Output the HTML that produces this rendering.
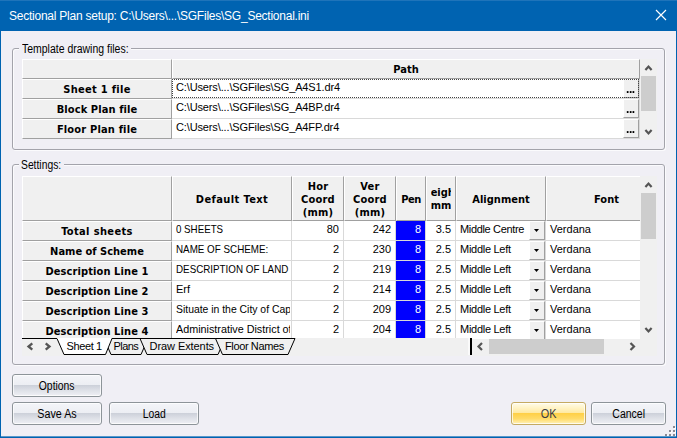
<!DOCTYPE html><html><head><meta charset="utf-8"><title>Sectional Plan setup</title><style>
*{box-sizing:border-box;margin:0;padding:0}
html,body{width:677px;height:438px;overflow:hidden}
body{background:#0063b1;font:11px "Liberation Sans",sans-serif;color:#000;position:relative}
div,svg,span.a{position:absolute}
#title{left:0;top:0;width:677px;height:31px;background:#0063b1;border-top:1px solid #1f74ba}
#title span{left:9px;top:8px;font-size:12px;color:#fff;white-space:nowrap;letter-spacing:-0.24px}
#client{left:1px;top:31px;width:675px;height:406px;background:#f0eff5}
.gb{border:1px solid #a3a3ab;border-radius:3px;box-shadow:1px 1px 0 #fbfbfd,inset 1px 1px 0 #fbfbfd}
.gbl{background:#f0eff5;white-space:nowrap;line-height:14px}
.ms{font-size:12px;display:inline-block;transform-origin:0 50%;white-space:nowrap}
.btn .ms{transform-origin:50% 50%;position:static}
.hc{background:#f0f0f0;border-right:1px solid #a0a0a0;border-bottom:1px solid #a0a0a0;border-top:1px solid #fff;border-left:1px solid #fff;font:bold 11px "DejaVu Sans Condensed","DejaVu Sans",sans-serif;text-align:center;white-space:nowrap;overflow:hidden;display:flex;align-items:center;justify-content:center;line-height:13px;padding-top:1px}
.hc span{position:static}
.rh{background:#f0f0f0;border-right:1px solid #a0a0a0;border-bottom:1px solid #a0a0a0;border-top:1px solid #fff;border-left:1px solid #fff;font:bold 11px "DejaVu Sans Condensed","DejaVu Sans",sans-serif;text-align:center;white-space:nowrap;overflow:hidden;line-height:13px;padding-top:3px}
.c{background:#fff;border-right:1px solid #d9d9d9;border-bottom:1px solid #d9d9d9;white-space:nowrap;overflow:hidden;line-height:13px;padding:2px 4px 0 4px}
.c span{display:inline-block;transform-origin:0 50%}
.r{text-align:right;padding-right:4px}
.pen{background:#0000ff;color:#fff}
.lr{border-bottom:0!important}
.fb{background:#f0f0f0;border-right:1px solid #a0a0a0;border-bottom:1px solid #a0a0a0;border-top:1px solid #fff;border-left:1px solid #fff}
.btn{border:1px solid #8d9499;border-radius:3px;text-align:center;line-height:22px;background:linear-gradient(#f4f5f9 0%,#eceef3 47%,#cdd1da 50%,#dde0e7 72%,#eff0f5 100%);box-shadow:inset 0 0 0 1px rgba(255,255,255,.75)}
.ok{border-color:#c4aa62;color:#3a3a44;background:linear-gradient(#fffce9 0%,#ffeaa2 47%,#ffd047 50%,#ffdb68 75%,#fff2bc 100%)}
.sb{background:#f0f0f0}
.th{background:#cdcdcd}
</style></head><body>
<div id="title"><span class="a">Sectional Plan setup: C:\Users\...\SGFiles\SG_Sectional.ini</span>
<svg style="left:655px;top:8px" width="12" height="12" viewBox="0 0 12 12"><path d="M1 1L11 11M11 1L1 11" stroke="#fff" stroke-width="1.15" fill="none"/></svg></div>
<div id="client"></div><div style="left:1px;top:436px;width:675px;height:1px;background:#5a97ca"></div>
<div class="gb" style="left:12px;top:48px;width:653px;height:102px;"></div>
<div class="gbl" style="left:19px;top:42px;width:112px;height:14px"><span class="a ms" style="left:3px;top:0;transform:scaleX(.873)">Template drawing files:</span></div>
<div style="left:22px;top:59px;width:635px;height:80px;background:#f0f0f0"></div>
<div class="hc" style="left:22px;top:59px;width:150px;height:20px;"></div>
<div class="hc" style="left:172px;top:59px;width:468px;height:20px;">Path</div>
<div class="rh" style="left:22px;top:79px;width:150px;height:20px;letter-spacing:0.29px;padding-top:3px">Sheet 1 file</div>
<div class="c" style="left:172px;top:79px;width:468px;height:20px;"><span style="letter-spacing:-0.13px">C:\Users\...\SGFiles\SG_A4S1.dr4</span></div>
<div class="fb" style="left:623px;top:79px;width:16px;height:19px;text-align:center;line-height:19px;font-size:12px;font-weight:bold;line-height:18px;letter-spacing:-0.4px;padding-right:1px"><span style="position:static;display:inline-block;will-change:transform">...</span></div>
<div class="rh" style="left:22px;top:99px;width:150px;height:20px;letter-spacing:0.1px;padding-top:3px">Block Plan file</div>
<div class="c" style="left:172px;top:99px;width:468px;height:20px;"><span style="letter-spacing:-0.13px">C:\Users\...\SGFiles\SG_A4BP.dr4</span></div>
<div class="fb" style="left:623px;top:99px;width:16px;height:19px;text-align:center;line-height:19px;font-size:12px;font-weight:bold;line-height:18px;letter-spacing:-0.4px;padding-right:1px"><span style="position:static;display:inline-block;will-change:transform">...</span></div>
<div class="rh" style="left:22px;top:119px;width:150px;height:20px;letter-spacing:0.17px;padding-top:3px">Floor Plan file</div>
<div class="c" style="left:172px;top:119px;width:468px;height:20px;"><span style="letter-spacing:-0.13px">C:\Users\...\SGFiles\SG_A4FP.dr4</span></div>
<div class="fb" style="left:623px;top:119px;width:16px;height:19px;text-align:center;line-height:19px;font-size:12px;font-weight:bold;line-height:18px;letter-spacing:-0.4px;padding-right:1px"><span style="position:static;display:inline-block;will-change:transform">...</span></div>
<div style="left:172px;top:79px;width:467px;height:19px;border:1px dotted #444"></div>
<div class="sb" style="left:640px;top:59px;width:17px;height:81px;"></div>
<div class="th" style="left:641px;top:76px;width:15px;height:35px;"></div>
<svg style="left:640px;top:59px" width="17" height="17" viewBox="0 0 17 17"><path d="M5.4 11L8.5 7.6L11.6 11" stroke="#555" stroke-width="2.2" fill="none"/></svg>
<svg style="left:640px;top:123px" width="17" height="17" viewBox="0 0 17 17"><path d="M5.4 7L8.5 10.4L11.6 7" stroke="#555" stroke-width="2.2" fill="none"/></svg>
<div class="gb" style="left:12px;top:164px;width:653px;height:201px;"></div>
<div class="gbl" style="left:19px;top:158px;width:45px;height:14px"><span class="a ms" style="left:2px;top:0;transform:scaleX(.86)">Settings:</span></div>
<div style="left:22px;top:176px;width:635px;height:180px;background:#f0f0f0"></div>
<div class="hc" style="left:22px;top:176px;width:150px;height:45px;"></div>
<div class="hc" style="left:172px;top:176px;width:120px;height:45px;"><span style="letter-spacing:0.4px">Default Text</span></div>
<div class="hc" style="left:292px;top:176px;width:52px;height:45px;"><span style="letter-spacing:0.2px">Hor<br>Coord<br>(mm)</span></div>
<div class="hc" style="left:344px;top:176px;width:52px;height:45px;"><span style="letter-spacing:0.2px">Ver<br>Coord<br>(mm)</span></div>
<div class="hc" style="left:396px;top:176px;width:30px;height:45px;"><span style="letter-spacing:-0.5px">Pen</span></div>
<div class="hc" style="left:426px;top:176px;width:30px;height:45px;"><span style="display:block;width:20px;overflow:hidden;"><span style="display:block;margin-left:-9px;width:38px">Height</span><span style="display:block;margin-left:-5px;width:30px">(mm)</span></span></div>
<div class="hc" style="left:456px;top:176px;width:90px;height:45px;">Alignment</div>
<div class="hc" style="left:546px;top:176px;width:94px;height:45px;border-right:0"><span style="padding-left:26px">Font</span></div>
<div class="rh" style="left:22px;top:221px;width:150px;height:20px;letter-spacing:0.36px">Total sheets</div>
<div class="c" style="left:172px;top:221px;width:120px;height:20px;"><div style="left:4px;top:2px;width:114px;height:15px;overflow:hidden"><span style="transform:scaleX(0.885)">0 SHEETS</span></div></div>
<div class="c r" style="left:292px;top:221px;width:52px;height:20px;">80</div>
<div class="c r" style="left:344px;top:221px;width:52px;height:20px;">242</div>
<div class="c r pen" style="left:396px;top:221px;width:30px;height:20px;">8</div>
<div class="c r" style="left:426px;top:221px;width:30px;height:20px;">3.5</div>
<div class="c" style="left:456px;top:221px;width:90px;height:20px;"><span style="letter-spacing:-0.34px">Middle Centre</span></div>
<div class="fb" style="left:529px;top:221px;width:16px;height:19px;"><svg width="5" height="3" viewBox="0 0 5 3" style="left:4px;top:7px"><path d="M0 0H5L2.5 3Z" fill="#000"/></svg></div>
<div class="c" style="left:546px;top:221px;width:94px;height:20px;border-right:0">Verdana</div>
<div class="rh" style="left:22px;top:241px;width:150px;height:20px;letter-spacing:0px">Name of Scheme</div>
<div class="c" style="left:172px;top:241px;width:120px;height:20px;"><div style="left:4px;top:2px;width:114px;height:15px;overflow:hidden"><span style="transform:scaleX(0.893)">NAME OF SCHEME:</span></div></div>
<div class="c r" style="left:292px;top:241px;width:52px;height:20px;">2</div>
<div class="c r" style="left:344px;top:241px;width:52px;height:20px;">230</div>
<div class="c r pen" style="left:396px;top:241px;width:30px;height:20px;">8</div>
<div class="c r" style="left:426px;top:241px;width:30px;height:20px;">2.5</div>
<div class="c" style="left:456px;top:241px;width:90px;height:20px;"><span style="letter-spacing:-0.28px">Middle Left</span></div>
<div class="fb" style="left:529px;top:241px;width:16px;height:19px;"><svg width="5" height="3" viewBox="0 0 5 3" style="left:4px;top:7px"><path d="M0 0H5L2.5 3Z" fill="#000"/></svg></div>
<div class="c" style="left:546px;top:241px;width:94px;height:20px;border-right:0">Verdana</div>
<div class="rh" style="left:22px;top:261px;width:150px;height:20px;letter-spacing:0.1px">Description Line 1</div>
<div class="c" style="left:172px;top:261px;width:120px;height:20px;"><div style="left:4px;top:2px;width:114px;height:15px;overflow:hidden"><span style="transform:scaleX(0.892)">DESCRIPTION OF LAND</span></div></div>
<div class="c r" style="left:292px;top:261px;width:52px;height:20px;">2</div>
<div class="c r" style="left:344px;top:261px;width:52px;height:20px;">219</div>
<div class="c r pen" style="left:396px;top:261px;width:30px;height:20px;">8</div>
<div class="c r" style="left:426px;top:261px;width:30px;height:20px;">2.5</div>
<div class="c" style="left:456px;top:261px;width:90px;height:20px;"><span style="letter-spacing:-0.28px">Middle Left</span></div>
<div class="fb" style="left:529px;top:261px;width:16px;height:19px;"><svg width="5" height="3" viewBox="0 0 5 3" style="left:4px;top:7px"><path d="M0 0H5L2.5 3Z" fill="#000"/></svg></div>
<div class="c" style="left:546px;top:261px;width:94px;height:20px;border-right:0">Verdana</div>
<div class="rh" style="left:22px;top:281px;width:150px;height:20px;letter-spacing:0.1px">Description Line 2</div>
<div class="c" style="left:172px;top:281px;width:120px;height:20px;"><div style="left:4px;top:2px;width:114px;height:15px;overflow:hidden"><span style="transform:scaleX(1)">Erf</span></div></div>
<div class="c r" style="left:292px;top:281px;width:52px;height:20px;">2</div>
<div class="c r" style="left:344px;top:281px;width:52px;height:20px;">214</div>
<div class="c r pen" style="left:396px;top:281px;width:30px;height:20px;">8</div>
<div class="c r" style="left:426px;top:281px;width:30px;height:20px;">2.5</div>
<div class="c" style="left:456px;top:281px;width:90px;height:20px;"><span style="letter-spacing:-0.28px">Middle Left</span></div>
<div class="fb" style="left:529px;top:281px;width:16px;height:19px;"><svg width="5" height="3" viewBox="0 0 5 3" style="left:4px;top:7px"><path d="M0 0H5L2.5 3Z" fill="#000"/></svg></div>
<div class="c" style="left:546px;top:281px;width:94px;height:20px;border-right:0">Verdana</div>
<div class="rh" style="left:22px;top:301px;width:150px;height:20px;letter-spacing:0.1px">Description Line 3</div>
<div class="c" style="left:172px;top:301px;width:120px;height:20px;"><div style="left:4px;top:2px;width:114px;height:15px;overflow:hidden"><span style="transform:scaleX(0.945)">Situate in the City of Cap</span></div></div>
<div class="c r" style="left:292px;top:301px;width:52px;height:20px;">2</div>
<div class="c r" style="left:344px;top:301px;width:52px;height:20px;">209</div>
<div class="c r pen" style="left:396px;top:301px;width:30px;height:20px;">8</div>
<div class="c r" style="left:426px;top:301px;width:30px;height:20px;">2.5</div>
<div class="c" style="left:456px;top:301px;width:90px;height:20px;"><span style="letter-spacing:-0.28px">Middle Left</span></div>
<div class="fb" style="left:529px;top:301px;width:16px;height:19px;"><svg width="5" height="3" viewBox="0 0 5 3" style="left:4px;top:7px"><path d="M0 0H5L2.5 3Z" fill="#000"/></svg></div>
<div class="c" style="left:546px;top:301px;width:94px;height:20px;border-right:0">Verdana</div>
<div class="rh lr" style="left:22px;top:321px;width:150px;height:18px;letter-spacing:0.1px">Description Line 4</div>
<div class="c lr" style="left:172px;top:321px;width:120px;height:18px;"><div style="left:4px;top:2px;width:114px;height:15px;overflow:hidden"><span style="transform:scaleX(0.98)">Administrative District of</span></div></div>
<div class="c r lr" style="left:292px;top:321px;width:52px;height:18px;">2</div>
<div class="c r lr" style="left:344px;top:321px;width:52px;height:18px;">204</div>
<div class="c r pen lr" style="left:396px;top:321px;width:30px;height:18px;">8</div>
<div class="c r lr" style="left:426px;top:321px;width:30px;height:18px;">2.5</div>
<div class="c lr" style="left:456px;top:321px;width:90px;height:18px;"><span style="letter-spacing:-0.28px">Middle Left</span></div>
<div class="fb lr" style="left:529px;top:321px;width:16px;height:18px;"><svg width="5" height="3" viewBox="0 0 5 3" style="left:4px;top:7px"><path d="M0 0H5L2.5 3Z" fill="#000"/></svg></div>
<div class="c lr" style="left:546px;top:321px;width:94px;height:18px;border-right:0">Verdana</div>
<div class="sb" style="left:640px;top:176px;width:17px;height:162px;"></div>
<div class="th" style="left:641px;top:193px;width:15px;height:46px;"></div>
<svg style="left:640px;top:176px" width="17" height="17" viewBox="0 0 17 17"><path d="M5.4 11L8.5 7.6L11.6 11" stroke="#555" stroke-width="2.2" fill="none"/></svg>
<svg style="left:640px;top:321px" width="17" height="17" viewBox="0 0 17 17"><path d="M5.4 7L8.5 10.4L11.6 7" stroke="#555" stroke-width="2.2" fill="none"/></svg>
<div style="left:22px;top:338px;width:450px;height:17px;background:#f0f0f0"></div>
<div style="left:472px;top:339px;width:185px;height:16px;background:#f0f0f0"></div>
<svg style="left:22px;top:338px" width="450" height="18" viewBox="22 338 450 18"><path d="M104 338.5L111 354.5H141L148 338.5Z" fill="#f0f0f0" stroke="#000" stroke-width="1"/><text x="113.5" y="350" font-size="11" letter-spacing="-0.55">Plans</text><path d="M140 338.5L147 354.5H218L225 338.5Z" fill="#f0f0f0" stroke="#000" stroke-width="1"/><text x="149.6" y="350" font-size="11" letter-spacing="-0.08">Draw Extents</text><path d="M215.5 338.5L222.5 354.5H288L295 338.5Z" fill="#f0f0f0" stroke="#000" stroke-width="1"/><text x="225" y="350" font-size="11" letter-spacing="-0.38">Floor Names</text><path d="M22 338.5H57" stroke="#000" fill="none"/><path d="M57 338.5L64 354.5H105.5L112 338.5" fill="#fff" stroke="#000" stroke-width="1"/><path d="M57.6 338.5H111.4" stroke="#fff" stroke-width="1.2"/><text x="66.5" y="350" font-size="11" letter-spacing="-0.39">Sheet 1</text><path d="M32.3 343.3L28.5 346.5L32.3 349.7M45.7 343.3L49.5 346.5L45.7 349.7" stroke="#555" stroke-width="2.3" fill="none"/></svg>
<div style="left:468px;top:338px;width:2px;height:17px;background:#fafafa"></div>
<div style="left:470px;top:338px;width:2px;height:17px;background:#000"></div>
<div class="th" style="left:489px;top:339px;width:115px;height:15px;"></div>
<svg style="left:472px;top:338px" width="17" height="17" viewBox="0 0 17 17"><path d="M10 5L6.5 8.5L10 12" stroke="#555" stroke-width="2.2" fill="none"/></svg>
<svg style="left:623px;top:338px" width="17" height="17" viewBox="0 0 17 17"><path d="M7.5 5L11 8.5L7.5 12" stroke="#555" stroke-width="2.2" fill="none"/></svg>
<div class="btn" style="left:12px;top:374px;width:90px;height:23px;"><span class="ms" style="transform:scaleX(.865)">Options</span></div>
<div class="btn" style="left:12px;top:402px;width:90px;height:23px;"><span class="ms" style="transform:scaleX(.893)">Save As</span></div>
<div class="btn" style="left:109px;top:402px;width:90px;height:23px;"><span class="ms" style="transform:scaleX(.865)">Load</span></div>
<div class="btn ok" style="left:511px;top:402px;width:75px;height:23px;"><span class="ms" style="transform:scaleX(.905)">OK</span></div>
<div class="btn" style="left:591px;top:402px;width:75px;height:23px;"><span class="ms" style="transform:scaleX(.875)">Cancel</span></div>
<svg style="left:663px;top:424px" width="13" height="12" viewBox="0 0 13 12"><rect x="11" y="3" width="2" height="2" fill="#fff"/><rect x="10" y="2" width="2" height="2" fill="#8a8a94"/><rect x="7" y="7" width="2" height="2" fill="#fff"/><rect x="6" y="6" width="2" height="2" fill="#8a8a94"/><rect x="11" y="7" width="2" height="2" fill="#fff"/><rect x="10" y="6" width="2" height="2" fill="#8a8a94"/><rect x="3" y="11" width="2" height="2" fill="#fff"/><rect x="2" y="10" width="2" height="2" fill="#8a8a94"/><rect x="7" y="11" width="2" height="2" fill="#fff"/><rect x="6" y="10" width="2" height="2" fill="#8a8a94"/><rect x="11" y="11" width="2" height="2" fill="#fff"/><rect x="10" y="10" width="2" height="2" fill="#8a8a94"/></svg>
</body></html>
